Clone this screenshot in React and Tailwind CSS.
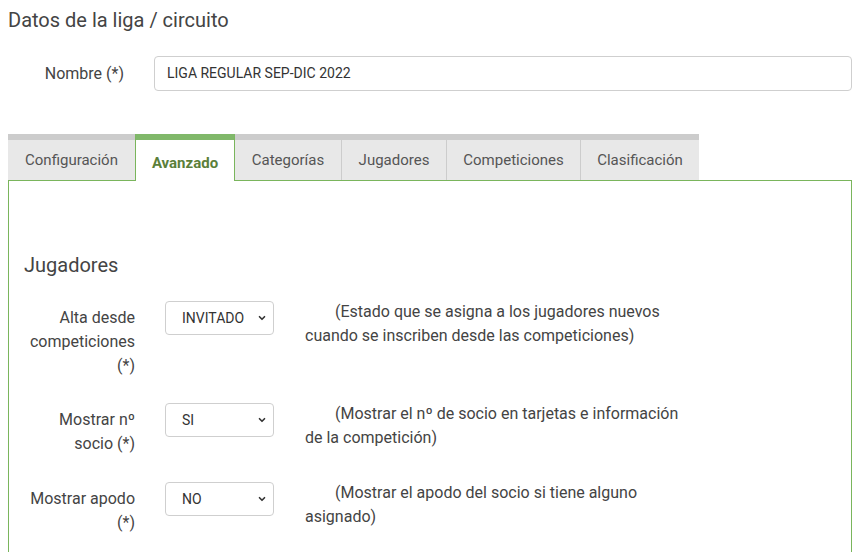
import { ChevronDown } from 'lucide-react';

const tabs = [
  { name: 'Configuración', w: 'w-[127px]' },
  { name: 'Avanzado', w: 'w-[100px]', active: true },
  { name: 'Categorías', w: 'w-[107px]' },
  { name: 'Jugadores', w: 'w-[105px]' },
  { name: 'Competiciones', w: 'w-[134px]' },
  { name: 'Clasificación', w: 'w-[118px]' },
];

const rows = [
  {
    label: ['Alta desde', 'competiciones', '(*)'],
    value: 'INVITADO',
    help: '(Estado que se asigna a los jugadores nuevos cuando se inscriben desde las competiciones)',
    mb: 'mb-[24px]',
  },
  {
    label: ['Mostrar nº', 'socio (*)'],
    value: 'SI',
    help: '(Mostrar el nº de socio en tarjetas e información de la competición)',
    mb: 'mb-[25px]',
  },
  {
    label: ['Mostrar apodo', '(*)'],
    value: 'NO',
    help: '(Mostrar el apodo del socio si tiene alguno asignado)',
    mb: 'mb-6',
  },
];

const Select = ({ value }) => (
  <div className="mt-[1px] w-[109px] h-[34px] shrink-0 flex items-center justify-between pl-[16px] pr-[6px] border border-[#cfcfcf] rounded-[4px] bg-white text-[14px] text-[#333]">
    <span>{value}</span>
    <ChevronDown className="w-[10px] h-[10px] text-[#333]" strokeWidth={4} />
  </div>
);

const App = () => {
  return (
    <div className="min-h-screen bg-white pl-2 pr-[11px] pt-[8px] text-[#444]" style={{ fontFamily: 'Roboto, "Liberation Sans", sans-serif' }}>
      <h3 className="text-[20px] leading-[24px] text-[#444]">Datos de la liga / circuito</h3>

      <div className="flex items-center mt-[24px]">
        <label className="w-[116px] text-right text-[16px] text-[#444]">Nombre (*)</label>
        <div className="ml-[30px] flex-1 h-[35px] flex items-center px-[12px] border border-[#cfcfcf] rounded-[4px] text-[14px] text-[#333]">
          LIGA REGULAR SEP-DIC 2022
        </div>
      </div>

      <div className="mt-[43px] flex relative z-10">
        {tabs.map((t, i) =>
          t.active ? (
            <div key={t.name} className={`${t.w} h-[47px] -mb-px pt-[6px] flex items-center justify-center bg-white border-t-[6px] border-t-[#80b86a] border-x border-x-[#7ab55c] text-[15px] font-bold text-[#5b7f3a]`}>
              {t.name}
            </div>
          ) : (
            <div key={t.name} className={`${t.w} h-[46px] flex items-center justify-center bg-[#e8e8e8] border-t-[6px] border-t-[#cccccc] text-[15px] text-[#555] ${i < tabs.length - 1 && !tabs[i + 1].active ? 'border-r border-r-[#cccccc]' : ''}`}>
              {t.name}
            </div>
          )
        )}
      </div>

      <div className="border border-[#7ab55c] border-b-0 pl-[15px] pt-[72px] pb-10">
        <h4 className="text-[20px] leading-[24px] text-[#444] mb-[23px]">Jugadores</h4>
        {rows.map((r) => (
          <div key={r.value} className={`flex items-start ${r.mb}`}>
            <div className="w-[111px] text-right text-[16px] leading-[24px] pt-[6px] text-[#444]">
              {r.label.map((l) => (
                <div key={l}>{l}</div>
              ))}
            </div>
            <div className="ml-[30px]">
              <Select value={r.value} />
            </div>
            <p className="ml-[31px] w-[385px] indent-[30px] text-[16px] leading-[24px] text-[#444]">{r.help}</p>
          </div>
        ))}
      </div>
    </div>
  );
};

export default App;
